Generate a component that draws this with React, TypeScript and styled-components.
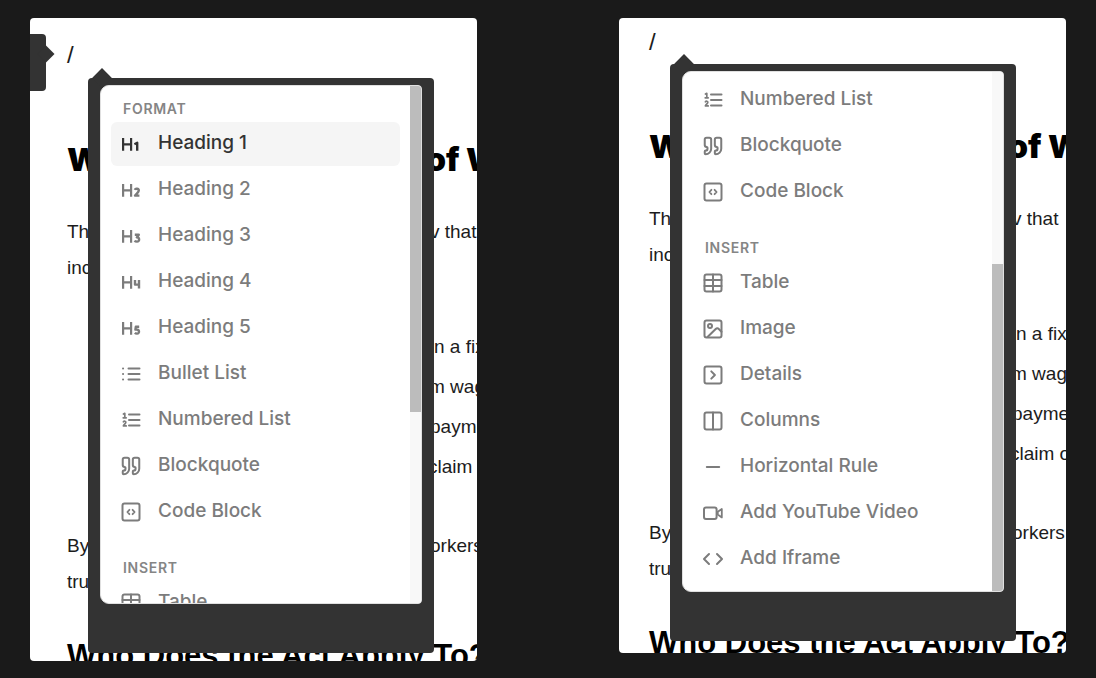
import React, { useLayoutEffect, useRef } from "react";
import styled, { createGlobalStyle } from "styled-components";
import { Quote } from "lucide-react";

const GlobalStyle = createGlobalStyle`
  * { box-sizing: border-box; }
  body { margin: 0; background: #1a1a1a; }
`;

const Page = styled.main`
  display: grid;
  grid-template-columns: 1fr 1fr;
  align-items: start;
  gap: 142px;
  min-height: 100vh;
  padding: 18px 30px;
`;

const Preview = styled.section<{ $height: number }>`
  position: relative;
  height: ${(p) => p.$height}px;
  overflow: hidden;
  border-radius: 4px;
  background: #fff;
`;

const Article = styled.article<{ $top: number; $inset: number }>`
  padding: ${(p) => p.$top}px 0 0 ${(p) => p.$inset}px;
  color: #1c1c1c;
  font-family: "Liberation Sans", Arial, sans-serif;
  font-size: 19px;
  line-height: 36px;
  white-space: nowrap;
`;

const Command = styled.p`
  margin: 0 0 67px;
  font-size: 24px;
`;

const Title = styled.h1`
  display: flex;
  margin: 0 0 34px;
  color: #000;
  font-family: Inter, sans-serif;
  font-size: 32px;
  font-weight: 900;
  line-height: 40px;
`;

const Subtitle = styled.h2`
  margin: 36px 0 0;
  color: #000;
  font-size: 31px;
  font-weight: 700;
  line-height: 40px;
`;

const Paragraph = styled.p`
  margin: 0;
`;

const Points = styled.ul`
  margin: 41px 0;
  padding: 0;
  list-style: none;
  line-height: 40px;
`;

const Line = styled.span`
  display: flex;
`;

const Point = styled.li`
  display: flex;
`;

const Lead = styled.span<{ $width: number }>`
  flex: 0 0 ${(p) => p.$width}px;
`;

const SideTab = styled.div`
  position: absolute;
  top: 16px;
  left: 0;
  width: 16px;
  height: 57px;
  border-radius: 0 4px 4px 0;
  background: #333;

  &::after {
    content: "";
    position: absolute;
    top: 14px;
    left: 10px;
    width: 12px;
    height: 12px;
    background: #333;
    transform: rotate(45deg);
  }
`;

const Popup = styled.div<{ $top: number; $left: number }>`
  position: absolute;
  top: ${(p) => p.$top}px;
  left: ${(p) => p.$left}px;
  width: 346px;
  padding: 7px 12px 49px;
  border-radius: 4px;
  background: #333;
  z-index: 1;

  &::before {
    content: "";
    position: absolute;
    top: -7px;
    left: 7px;
    width: 14px;
    height: 14px;
    background: #333;
    transform: rotate(45deg);
  }
`;

const Menu = styled.div<{ $height: number }>`
  position: relative;
  display: flex;
  height: ${(p) => p.$height}px;
  overflow: hidden;
  border: 1px solid #e0e0e0;
  border-radius: 9px 4px 4px 9px;
  background: #fff;
`;

const Scroller = styled.div`
  flex: 1;
  overflow-y: auto;
  padding: 15px 10px 10px;
  scrollbar-width: none;
  font-family: Inter, sans-serif;
`;

const Track = styled.div<{ $end: boolean }>`
  display: flex;
  flex: 0 0 11px;
  flex-direction: column;
  justify-content: ${(p) => (p.$end ? "flex-end" : "flex-start")};
  background: #f8f8f8;
`;

const Thumb = styled.div`
  height: 63%;
  background: #bcbcbc;
`;

const Group = styled.div`
  display: flex;
  flex-direction: column;
  gap: 2px;

  & + & { margin-top: 26px; }
`;

const GroupLabel = styled.div`
  margin-bottom: 3px;
  padding-left: 12px;
  color: #858585;
  font-size: 14px;
  font-weight: 600;
  letter-spacing: 0.05em;
  line-height: 16px;
`;

const Item = styled.button<{ $active: boolean }>`
  display: flex;
  align-items: center;
  gap: 15px;
  height: 44px;
  padding: 0 8px;
  border: 0;
  border-radius: 6px;
  background: ${(p) => (p.$active ? "#f5f5f5" : "transparent")};
  color: ${(p) => (p.$active ? "#333" : "#7c7c7c")};
  font: 500 19px/24px Inter, sans-serif;
  text-align: left;
  cursor: pointer;
`;

const ItemText = styled.span`
  padding-bottom: 2px;
`;

const Glyph = styled.svg`
  flex: none;
  width: 24px;
  height: 24px;
  fill: none;
  stroke: currentColor;
  stroke-width: 2;
  stroke-linecap: round;
  stroke-linejoin: round;
`;

const QuoteBox = styled.span`
  display: grid;
  flex: none;
  place-items: center;
  width: 24px;
  height: 24px;
`;

const digits: Record<string, string> = {
  h1: "M15.4 12.2 18.2 10.8V18.7",
  h2: "M15.8 11.8C16.4 10.2 19.8 10.4 19.8 12.6C19.8 14.2 17.4 15.6 16 17.6H20.4",
  h3: "M15.8 10.8H19.8L17.8 13.4C20.9 13.4 20.8 17.6 18 17.6C16.8 17.6 16 17.2 15.6 16.6",
  h4: "M16 10V14.6H20M20 10V18.6",
  h5: "M20.2 10.8H16.8L16.4 13.6C20.8 12.8 21 17.6 18 17.6C16.8 17.6 16.2 17.2 15.8 16.8",
};

const frame = <rect x="3.5" y="3.5" width="17" height="17" rx="2" />;

const drawings: Record<string, React.ReactNode> = {
  bullet: (
    <path d="M9.5 6.5H20.5M9.5 12H20.5M9.5 17.5H20.5M4 6.5H4.1M4 12H4.1M4 17.5H4.1" />
  ),
  numbered: (
    <>
      <path d="M10 6.5H20.5M10 12H20.5M10 17.5H20.5" />
      <path strokeWidth="1.7" d="M4.4 6 5.8 5.4V9.6M4.2 9.8H7.2M4.4 13.8C5.2 12.8 7 13.2 6.8 14.4C6.7 15.6 5 16.4 4.4 17.9H7.2" />
    </>
  ),
  code: (
    <>
      {frame}
      <path strokeWidth="1.8" d="M10.4 9.8 8.4 12 10.4 14.2M13.6 9.8 15.6 12 13.6 14.2" />
    </>
  ),
  table: (
    <>
      {frame}
      <path d="M12 3.5V20.5M3.5 9H20.5M3.5 15H20.5" />
    </>
  ),
  image: (
    <>
      {frame}
      <circle cx="9" cy="9" r="2" />
      <path d="M6.5 20 14.7 12C15.6 11.1 17 11.1 17.8 12L20.5 14.7" />
    </>
  ),
  details: (
    <>
      {frame}
      <path d="M10.3 8.4 13.9 12 10.3 15.6" />
    </>
  ),
  columns: (
    <>
      {frame}
      <path d="M12 3.5V20.5" />
    </>
  ),
  rule: <path d="M5.8 12H18.2" />,
  video: (
    <>
      <rect x="3" y="6.5" width="12.6" height="11.4" rx="2" />
      <path strokeWidth="1.8" d="M16.8 10.8 20.8 8V16.4L16.8 13.6Z" />
    </>
  ),
  iframe: <path d="M8 7 3 12 8 17M16 7 21 12 16 17" />,
};

function Icon({ name }: { name: string }) {
  if (name === "quote") {
    return (
      <QuoteBox>
        <Quote size={22} strokeWidth={2.2} />
      </QuoteBox>
    );
  }
  if (digits[name]) {
    return (
      <Glyph viewBox="0 0 24 24" aria-hidden="true">
        <path strokeLinecap="butt" strokeWidth="2.2" d="M4.1 6V18.7M12.1 6V18.7M4.1 12.3H12.1" />
        <path strokeLinecap="butt" strokeWidth="2.4" d={digits[name]} />
      </Glyph>
    );
  }
  return (
    <Glyph viewBox="0 0 24 24" aria-hidden="true">
      {drawings[name]}
    </Glyph>
  );
}

const groups = [
  {
    label: "FORMAT",
    items: [
      ["h1", "Heading 1"],
      ["h2", "Heading 2"],
      ["h3", "Heading 3"],
      ["h4", "Heading 4"],
      ["h5", "Heading 5"],
      ["bullet", "Bullet List"],
      ["numbered", "Numbered List"],
      ["quote", "Blockquote"],
      ["code", "Code Block"],
    ],
  },
  {
    label: "INSERT",
    items: [
      ["table", "Table"],
      ["image", "Image"],
      ["details", "Details"],
      ["columns", "Columns"],
      ["rule", "Horizontal Rule"],
      ["video", "Add YouTube Video"],
      ["iframe", "Add Iframe"],
    ],
  },
];

interface MenuProps {
  top: number;
  left: number;
  height: number;
  end: boolean;
}

function SlashMenu({ top, left, height, end }: MenuProps) {
  const scroller = useRef<HTMLDivElement>(null);

  useLayoutEffect(() => {
    const el = scroller.current;
    if (el && end) el.scrollTop = el.scrollHeight;
  }, [end]);

  return (
    <Popup $top={top} $left={left}>
      <Menu $height={height}>
        <Scroller ref={scroller}>
          {groups.map((group) => (
            <Group key={group.label} role="group" aria-label={group.label}>
              <GroupLabel>{group.label}</GroupLabel>
              {group.items.map(([icon, text]) => (
                <Item key={text} type="button" $active={icon === "h1"}>
                  <Icon name={icon} />
                  <ItemText>{text}</ItemText>
                </Item>
              ))}
            </Group>
          ))}
        </Scroller>
        <Track $end={end}>
          <Thumb />
        </Track>
      </Menu>
    </Popup>
  );
}

const points: [number, string][] = [
  [367, "n a fix"],
  [362, "m wag"],
  [363, "payme"],
  [361, "claim o"],
];

interface PreviewProps {
  height: number;
  top: number;
  inset: number;
  menuTop: number;
  menuHeight: number;
  end: boolean;
}

function EditorPreview({ height, top, inset, menuTop, menuHeight, end }: PreviewProps) {
  return (
    <Preview $height={height}>
      <Article $top={top} $inset={inset}>
        <Command>/</Command>
        <Title>
          <Lead $width={359}>W</Lead>
          <span>of W</span>
        </Title>
        <Paragraph>
          <Line>
            <Lead $width={363}>Th</Lead>
            <span>v that</span>
          </Line>
          <Line>inc</Line>
        </Paragraph>
        <Points>
          {points.map(([width, text]) => (
            <Point key={text}>
              <Lead $width={width} />
              <span>{text}</span>
            </Point>
          ))}
        </Points>
        <Paragraph>
          <Line>
            <Lead $width={363}>By</Lead>
            <span>orkers</span>
          </Line>
          <Line>tru</Line>
        </Paragraph>
        <Subtitle>Who Does the Act Apply To?</Subtitle>
      </Article>
      {!end && <SideTab />}
      <SlashMenu top={menuTop} left={inset + 21} height={menuHeight} end={end} />
    </Preview>
  );
}

export default function App() {
  return (
    <>
      <GlobalStyle />
      <Page>
        <EditorPreview height={643} top={19} inset={37} menuTop={60} menuHeight={519} end={false} />
        <EditorPreview height={635} top={6} inset={30} menuTop={46} menuHeight={521} end />
      </Page>
    </>
  );
}
